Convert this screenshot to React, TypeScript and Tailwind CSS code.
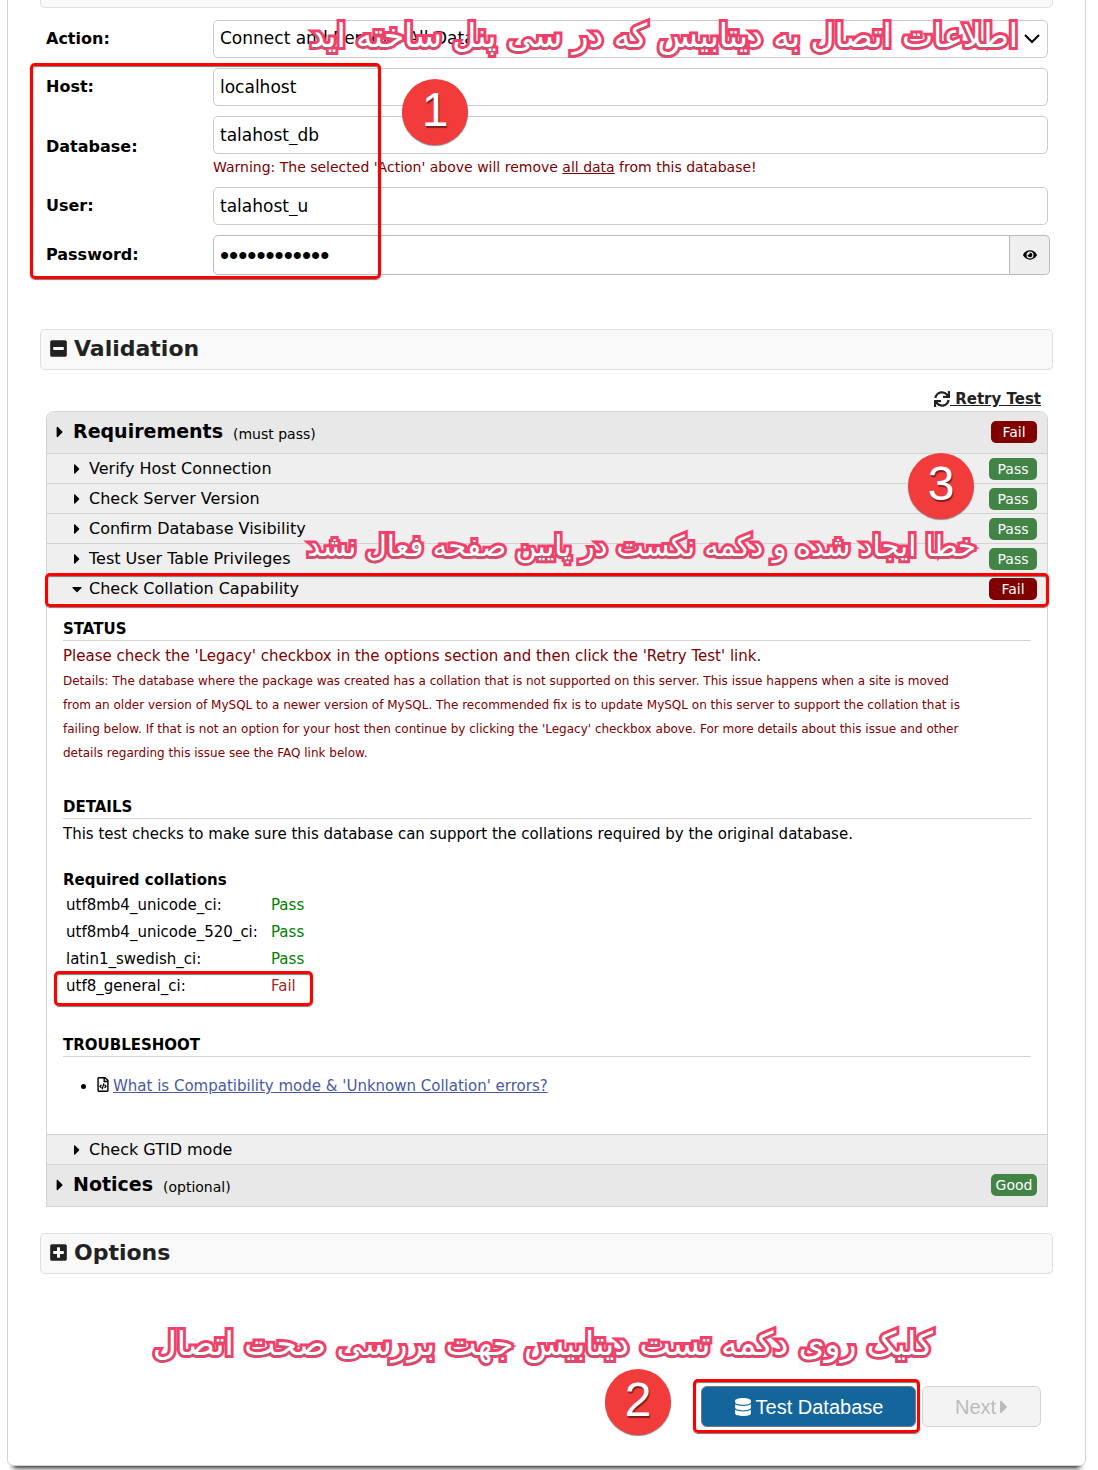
import React from 'react'
import {
  FaCaretDown,
  FaCaretRight,
  FaDatabase,
  FaEye,
  FaMinusSquare,
  FaPlusSquare,
  FaRegFileCode,
  FaSync,
} from 'react-icons/fa'
import clsx from 'clsx'

type Result = 'Pass' | 'Fail' | 'Good'

const checks: { title: string; result: Result }[] = [
  { title: 'Verify Host Connection', result: 'Pass' },
  { title: 'Check Server Version', result: 'Pass' },
  { title: 'Confirm Database Visibility', result: 'Pass' },
  { title: 'Test User Table Privileges', result: 'Pass' },
]

const collations = [
  { name: 'utf8mb4_unicode_ci', pass: true },
  { name: 'utf8mb4_unicode_520_ci', pass: true },
  { name: 'latin1_swedish_ci', pass: true },
  { name: 'utf8_general_ci', pass: false },
]

const fieldClass =
  'w-full h-[38px] px-1.5 text-[17px] text-black bg-white border border-[#ccc] rounded-[5px]'

const Badge: React.FC<{ result: Result; narrow?: boolean }> = ({ result, narrow }) => (
  <span
    className={clsx(
      'h-[22px] rounded-[5px] text-sm leading-[22px] text-center text-white',
      narrow ? 'w-[46px]' : 'w-12',
      result === 'Fail' ? 'bg-[#800000]' : 'bg-[#418446]'
    )}
  >
    {result}
  </span>
)

const SectionHeader: React.FC<{ title: string; open?: boolean }> = ({ title, open }) => (
  <h2 className="border border-[#dfdfdf] rounded-[5px] bg-[#f9f9f9]">
    <button
      type="button"
      aria-expanded={!!open}
      className="flex items-center w-full h-[39px] px-2 pb-0.5 gap-1.5 text-[22px] font-bold text-[#222]"
    >
      {open ? <FaMinusSquare className="size-[19px]" /> : <FaPlusSquare className="size-[19px]" />}
      {title}
    </button>
  </h2>
)

const GroupRow: React.FC<{ title: string; note: string; result: Result }> = ({ title, note, result }) => (
  <div className="flex items-center h-[41px] pr-[10px] pb-0.5 bg-[#e8e8e8]">
    <button type="button" className="flex flex-1 items-center pl-1 text-black">
      <FaCaretRight className="size-[18px]" />
      <span className="pl-1 text-[19px] font-bold">{title}</span>
      <span className="pl-2.5 pt-1 text-sm">{note}</span>
    </button>
    <Badge result={result} narrow />
  </div>
)

const CheckRow: React.FC<{ title: string; result?: Result; open?: boolean }> = ({ title, result, open }) => (
  <div className="flex items-center h-[30px] pr-[10px] bg-[#efefef] border-t border-[#d3d3d3]">
    <button type="button" aria-expanded={!!open} className="flex flex-1 items-center pl-[22px] gap-1 text-base text-black">
      {open ? <FaCaretDown className="size-4" /> : <FaCaretRight className="size-4" />}
      {title}
    </button>
    {result && <Badge result={result} />}
  </div>
)

const Highlight: React.FC<{ className: string }> = ({ className }) => (
  <div
    className={clsx(
      'absolute border-[3px] border-[#f00] rounded-[5px] shadow-[0_1px_1px_#777,inset_0_1px_1px_#777] pointer-events-none',
      className
    )}
  />
)

const Step: React.FC<{ n: number; className: string }> = ({ n, className }) => (
  <div
    className={clsx(
      'absolute z-10 size-[66px] rounded-full bg-[#f23c3c] shadow-[0_1px_1px_#888] text-center text-[48px] leading-[62px] text-white font-["Liberation_Sans",sans-serif] [text-shadow:1px_2px_1px_#7a2020]',
      className
    )}
  >
    {n}
  </div>
)

const Note: React.FC<{ className: string; children: React.ReactNode }> = ({ className, children }) => (
  <p
    dir="rtl"
    lang="fa"
    className={clsx(
      'absolute z-10 whitespace-nowrap leading-10 text-white pointer-events-none [-webkit-text-stroke:6px_#f43f6a] [paint-order:stroke_fill] [text-shadow:0_1px_1px_#777]',
      className
    )}
  >
    {children}
  </p>
)

const DetailHeading: React.FC<{ children: React.ReactNode }> = ({ children }) => (
  <h3 className="h-6 border-b border-[#d3d3d3] text-[15px] leading-6 font-bold">{children}</h3>
)

export default function App() {
  return (
    <div className="bg-white overflow-hidden pb-1 font-['DejaVu_Sans',Verdana,sans-serif] text-black">
      <main className="-mt-[34px] ml-[7px] mr-3 border border-[#d3d3d3] rounded-md px-8 pb-[38px] bg-white shadow-[0_8px_5px_-6px_#222]">
        <SectionHeader title="Setup" open />

        <form className="pl-1.5 pr-[5px] mt-3 grid grid-cols-[167px_1fr] gap-y-[10px] items-center text-base" onSubmit={e => e.preventDefault()}>
          <label htmlFor="action" className="font-bold">Action:</label>
          <div className="relative">
            <select id="action" className={clsx(fieldClass, 'appearance-none')}>
              <option>Connect and Remove All Data</option>
            </select>
            <svg viewBox="0 0 16 10" className="absolute right-2 top-[14px] w-4 h-[10px]" fill="none" stroke="#000" strokeWidth="2">
              <path d="M1 1l7 7 7-7" />
            </svg>
            <Note className="right-[30px] -top-1 text-[33px]">
              اطلاعات اتصال به دیتابیس که در سی پنل ساخته اید
            </Note>
          </div>

          <div className="relative col-span-2 grid grid-cols-subgrid gap-y-[10px] items-center">
            <label htmlFor="host" className="font-bold">Host:</label>
            <input id="host" className={fieldClass} defaultValue="localhost" />

            <label htmlFor="database" className="font-bold">Database:</label>
            <div>
              <input id="database" className={fieldClass} defaultValue="talahost_db" />
              <p className="h-[23px] text-sm leading-[26px] text-[#800000]">
                Warning: The selected 'Action' above will remove <u>all data</u> from this database!
              </p>
            </div>

            <label htmlFor="user" className="font-bold">User:</label>
            <input id="user" className={fieldClass} defaultValue="talahost_u" />

            <label htmlFor="password" className="font-bold">Password:</label>
            <div className="flex h-10 -mr-0.5">
              <input
                id="password"
                type="password"
                className="flex-1 min-w-0 px-1.5 text-[26px] font-['Liberation_Sans',sans-serif] border border-[#bbb] rounded-l-[5px]"
                defaultValue="talahost1234"
              />
              <button type="button" aria-label="Show password" className="flex w-10 items-center justify-center border border-l-0 border-[#bbb] rounded-r-[5px] bg-[#efefef]">
                <FaEye className="size-[14px]" />
              </button>
            </div>
            <Highlight className="-left-4 -top-[5px] w-[351px] -bottom-1" />
            <Step n={1} className="left-[356px] top-[11px]" />
          </div>
        </form>

        <section className="mt-[54px]">
          <SectionHeader title="Validation" open />

          <div className="pl-1.5 pr-[5px]">
            <div className="flex justify-end h-[41px] pt-[17px] pr-[7px]">
              <a href="#retry" className="flex items-center h-6 text-[15px] font-bold text-[#222]">
                <FaSync className="size-4" />
                <span className="underline whitespace-pre"> Retry Test</span>
              </a>
            </div>

            <div className="border border-[#d3d3d3] rounded-t-lg">
              <div className="rounded-t-lg overflow-hidden">
                <GroupRow title="Requirements" note="(must pass)" result="Fail" />
              </div>
              <div className="relative">
                {checks.map(check => (
                  <CheckRow key={check.title} title={check.title} result={check.result} />
                ))}
                <Step n={3} className="right-[73px] top-0" />
                <Note className="right-[71px] top-[73px] text-[29px]">
                  خطا ایجاد شده و دکمه نکست در پایین صفحه فعال نشد
                </Note>
              </div>
              <div className="relative">
                <CheckRow title="Check Collation Capability" result="Fail" open />
                <Highlight className="-inset-x-0.5 top-0 -bottom-1" />
              </div>

              <div className="px-4 pt-[14px] pb-[33px] text-[15px] leading-[30px]">
                <DetailHeading>STATUS</DetailHeading>
                <div className="pt-0.5 text-[#800000]">
                  <p className="leading-[26px]">
                    Please check the 'Legacy' checkbox in the options section and then click the 'Retry Test' link.
                  </p>
                  <p className="pr-16 text-xs leading-6">
                    Details: The database where the package was created has a collation that is not supported on this
                    server. This issue happens when a site is moved from an older version of MySQL to a newer version of
                    MySQL. The recommended fix is to update MySQL on this server to support the collation that is failing
                    below. If that is not an option for your host then continue by clicking the 'Legacy' checkbox above.
                    For more details about this issue and other details regarding this issue see the FAQ link below.
                  </p>
                </div>

                <div className="mt-[30px]">
                  <DetailHeading>DETAILS</DetailHeading>
                  <p>This test checks to make sure this database can support the collations required by the original database.</p>
                </div>

                <h4 className="mt-[19px] leading-6 font-bold">Required collations</h4>
                <table className="leading-[27px]">
                  <tbody>
                    {collations.map(row => (
                      <tr key={row.name} className="relative">
                        <td className="w-[208px] pl-[3px]">{row.name}:</td>
                        <td className={clsx('w-[42px]', row.pass ? 'text-[#008000]' : 'text-[#a52a2a]')}>
                          {row.pass ? 'Pass' : 'Fail'}
                          {!row.pass && <Highlight className="-left-[9px] right-0 -top-0.5 -bottom-1.5" />}
                        </td>
                      </tr>
                    ))}
                  </tbody>
                </table>

                <div className="mt-[33px]">
                  <DetailHeading>TROUBLESHOOT</DetailHeading>
                  <ul className="mt-[14px] pl-[34px] list-disc">
                    <li>
                      <FaRegFileCode className="inline-block w-3 h-[15px] mr-1 -mt-1" />
                      <a href="#faq" className="text-[#485aa2] underline">
                        What is Compatibility mode &amp; 'Unknown Collation' errors?
                      </a>
                    </li>
                  </ul>
                </div>
              </div>

              <CheckRow title="Check GTID mode" />
              <div className="border-t border-[#d3d3d3]">
                <GroupRow title="Notices" note="(optional)" result="Good" />
              </div>
            </div>
          </div>
        </section>

        <section className="mt-[26px]">
          <SectionHeader title="Options" />
        </section>

        <footer className="relative flex justify-end gap-1.5 mt-[112px] pr-3 font-['Liberation_Sans',Arial,sans-serif] text-xl">
          <Note className="right-[120px] -top-[62px] text-[33px] font-['DejaVu_Sans',sans-serif]">
            کلیک روی دکمه تست دیتابیس جهت بررسی صحت اتصال
          </Note>
          <div className="relative">
            <Step n={2} className="-left-24 -top-[17px]" />
            <button type="button" className="flex items-center justify-center w-[215px] h-[41px] gap-1 border border-[#7a7a7a] rounded-md bg-[#13659c] text-white">
              <FaDatabase className="size-[18px]" />
              Test Database
            </button>
            <Highlight className="-left-2 -right-1 -top-[7px] -bottom-1.5" />
          </div>
          <button type="button" disabled className="flex items-center justify-center gap-1 w-[119px] h-[41px] border border-[#d3d3d3] rounded-md bg-[#f3f3f3] text-[#bbb]">
            Next
            <FaCaretRight className="w-2 h-[22px]" />
          </button>
        </footer>
      </main>
    </div>
  )
}
